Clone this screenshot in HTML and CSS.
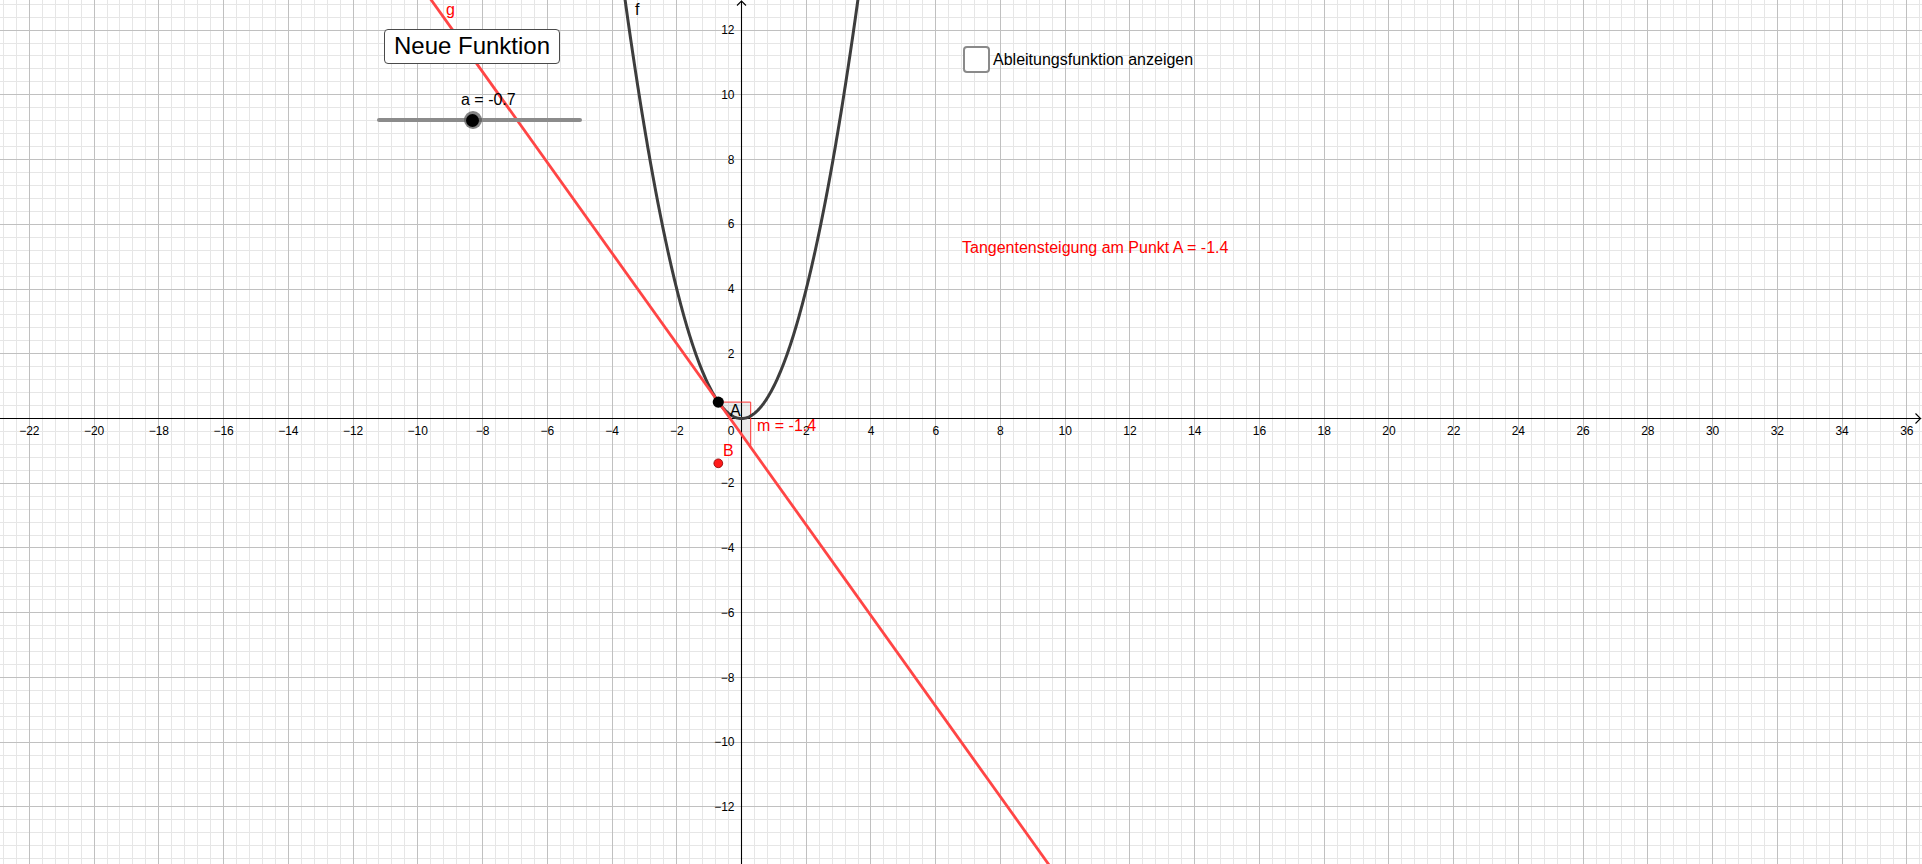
FILE: index.html
```html
<!DOCTYPE html>
<html lang="de">
<head>
<meta charset="utf-8">
<title>Tangente</title>
<link rel="stylesheet" href="styles.css">
</head>
<body>
<div class="canvas">
  <svg class="plot" width="1922" height="864" viewBox="0 0 1922 864" xmlns="http://www.w3.org/2000/svg">
    <g id="minor" class="grid-minor"></g>
    <g id="major" class="grid-major"></g>
    <g class="axes">
      <line x1="0" y1="418.5" x2="1920" y2="418.5"></line>
      <line x1="741.5" y1="1" x2="741.5" y2="864"></line>
      <polyline points="1915.5,413.5 1920.5,418.5 1915.5,423.5"></polyline>
      <polyline points="737,5.5 741.5,1 746,5.5"></polyline>
    </g>
    <g id="ticks" class="tick-labels"></g>
    <text class="tick-labels" x="734.5" y="435" text-anchor="end">0</text>

    <polygon class="slope-tri" points="718.3,402.1 750.7,402.1 750.7,447.5"></polygon>
    <path id="parabola" class="curve-f" d=""></path>
    <line id="tangent" class="line-g" x1="0" y1="0" x2="0" y2="0"></line>

    <circle class="pt-a" cx="718.3" cy="402.1" r="5.6"></circle>
    <circle class="pt-b" cx="718.3" cy="463.3" r="4.4"></circle>

    <text class="lbl lbl-black" x="730" y="416">A</text>
    <text class="lbl lbl-red" x="723" y="456">B</text>
    <text class="lbl lbl-red" x="757" y="431">m = -1.4</text>
    <text class="lbl lbl-red" x="446" y="15">g</text>
    <text class="lbl lbl-black" x="635" y="15">f</text>
    <text class="lbl lbl-black" x="461" y="104.5">a = -0.7</text>
    <text class="lbl lbl-red" x="962" y="253">Tangentensteigung am Punkt A = -1.4</text>
  </svg>

  <button class="btn-new" type="button">Neue Funktion</button>

  <div class="slider">
    <div class="slider-track"></div>
    <div class="slider-knob" style="left: 95.7px"><span class="knob-core"></span></div>
  </div>

  <label class="check">
    <span class="check-box"></span>
    <span class="check-text">Ableitungsfunktion anzeigen</span>
  </label>
</div>
<script src="script.js"></script>
</body>
</html>
```
FILE: styles.css
```css
html, body {
  margin: 0;
  padding: 0;
  background: #ffffff;
  overflow: hidden;
}

.canvas {
  position: relative;
  width: 1922px;
  height: 864px;
  font-family: "Liberation Sans", Arial, sans-serif;
  color: #000;
}

.plot {
  display: block;
}

.grid-minor line {
  stroke: #e6e6e6;
  stroke-width: 1;
}

.grid-major line {
  stroke: #c0c0c0;
  stroke-width: 1;
}

.axes line,
.axes polyline {
  stroke: #000;
  stroke-width: 1.1;
  fill: none;
}

.tick-labels {
  font-family: "Liberation Sans", Arial, sans-serif;
  font-size: 12px;
  fill: #000;
}

.curve-f {
  fill: none;
  stroke: #3d3d3d;
  stroke-width: 3;
  stroke-linejoin: round;
}

.line-g {
  stroke: #ff4545;
  stroke-width: 2.8;
}

.slope-tri {
  fill: rgba(0, 0, 0, 0.075);
  stroke: #ff3030;
  stroke-width: 1;
}

.pt-a {
  fill: #000;
}

.pt-b {
  fill: #ff1a1a;
  stroke: #8a0000;
  stroke-width: 0.8;
}

.lbl {
  font-family: "Liberation Sans", Arial, sans-serif;
  font-size: 16px;
}

.lbl-black {
  fill: #000;
}

.lbl-red {
  fill: #ff0000;
}

.btn-new {
  position: absolute;
  left: 384px;
  top: 29px;
  width: 176px;
  height: 35px;
  box-sizing: border-box;
  margin: 0;
  padding: 0 0 1px 0;
  border: 1px solid #4a4a4a;
  border-radius: 4px;
  background: #ffffff;
  font-family: "Liberation Sans", Arial, sans-serif;
  font-size: 24px;
  color: #000;
  display: flex;
  align-items: center;
  justify-content: center;
}

.slider {
  position: absolute;
  left: 377px;
  top: 111px;
  width: 205px;
  height: 18px;
  display: flex;
  align-items: center;
}

.slider-track {
  flex: 1;
  height: 4px;
  border-radius: 2px;
  background: #8b8b8b;
}

.slider-knob {
  position: absolute;
  top: 0;
  width: 18px;
  height: 18px;
  margin-left: -9px;
  border-radius: 50%;
  background: rgba(90, 90, 90, 0.75);
  display: flex;
  align-items: center;
  justify-content: center;
}

.knob-core {
  width: 13px;
  height: 13px;
  border-radius: 50%;
  background: #000;
}

.check {
  position: absolute;
  left: 963px;
  top: 46px;
  display: flex;
  align-items: center;
  gap: 3px;
  font-size: 16px;
}

.check-box {
  width: 27px;
  height: 27px;
  box-sizing: border-box;
  border: 2px solid #8a8a8a;
  border-radius: 4px;
  background: #fff;
}

.check-text {
  line-height: 18px;
  padding-top: 1px;
}
```
FILE: script.js
```js
(function () {
  var NS = 'http://www.w3.org/2000/svg';
  var U = 32.37, X0 = 741, Y0 = 418, W = 1922, H = 864;

  function el(tag, attrs, parent) {
    var e = document.createElementNS(NS, tag);
    for (var k in attrs) e.setAttribute(k, attrs[k]);
    if (parent) parent.appendChild(e);
    return e;
  }

  var minor = document.getElementById('minor');
  var major = document.getElementById('major');
  var ticks = document.getElementById('ticks');

  var i, v, p;
  for (i = -70; i <= 110; i++) {
    v = X0 + i * 0.4 * U;
    if (v < -1 || v > W + 1) continue;
    p = Math.round(v) + 0.5;
    el('line', { x1: p, y1: 0, x2: p, y2: H }, (i % 5 === 0) ? major : minor);
  }
  for (i = -40; i <= 40; i++) {
    v = Y0 - i * 0.4 * U;
    if (v < -1 || v > H + 1) continue;
    p = Math.round(v) + 0.5;
    el('line', { x1: 0, y1: p, x2: W, y2: p }, (i % 5 === 0) ? major : minor);
  }

  function fmt(n) {
    return n < 0 ? '\u2212' + Math.abs(n) : String(n);
  }

  for (i = -22; i <= 36; i += 2) {
    if (i === 0) continue;
    var t = el('text', { x: X0 + i * U + 0.5, y: 435, 'text-anchor': 'middle' }, ticks);
    t.textContent = fmt(i);
  }
  for (i = -12; i <= 12; i += 2) {
    if (i === 0) continue;
    var ty = el('text', { x: 734.5, y: Y0 - i * U + 4.7, 'text-anchor': 'end' }, ticks);
    ty.textContent = fmt(i);
  }

  var d = '';
  for (var x = -3.75; x <= 3.751; x += 0.02) {
    var px = X0 + 0.5 + x * U;
    var py = Y0 + 0.5 - x * x * U;
    d += (d ? ' L' : 'M') + px.toFixed(2) + ',' + py.toFixed(2);
  }
  document.getElementById('parabola').setAttribute('d', d);

  var g = document.getElementById('tangent');
  function gy(xv) { return -1.4 * xv - 0.49; }
  var xa = -11, xb = 11;
  g.setAttribute('x1', (X0 + 0.5 + xa * U).toFixed(2));
  g.setAttribute('y1', (Y0 + 0.5 - gy(xa) * U).toFixed(2));
  g.setAttribute('x2', (X0 + 0.5 + xb * U).toFixed(2));
  g.setAttribute('y2', (Y0 + 0.5 - gy(xb) * U).toFixed(2));
})();
```
